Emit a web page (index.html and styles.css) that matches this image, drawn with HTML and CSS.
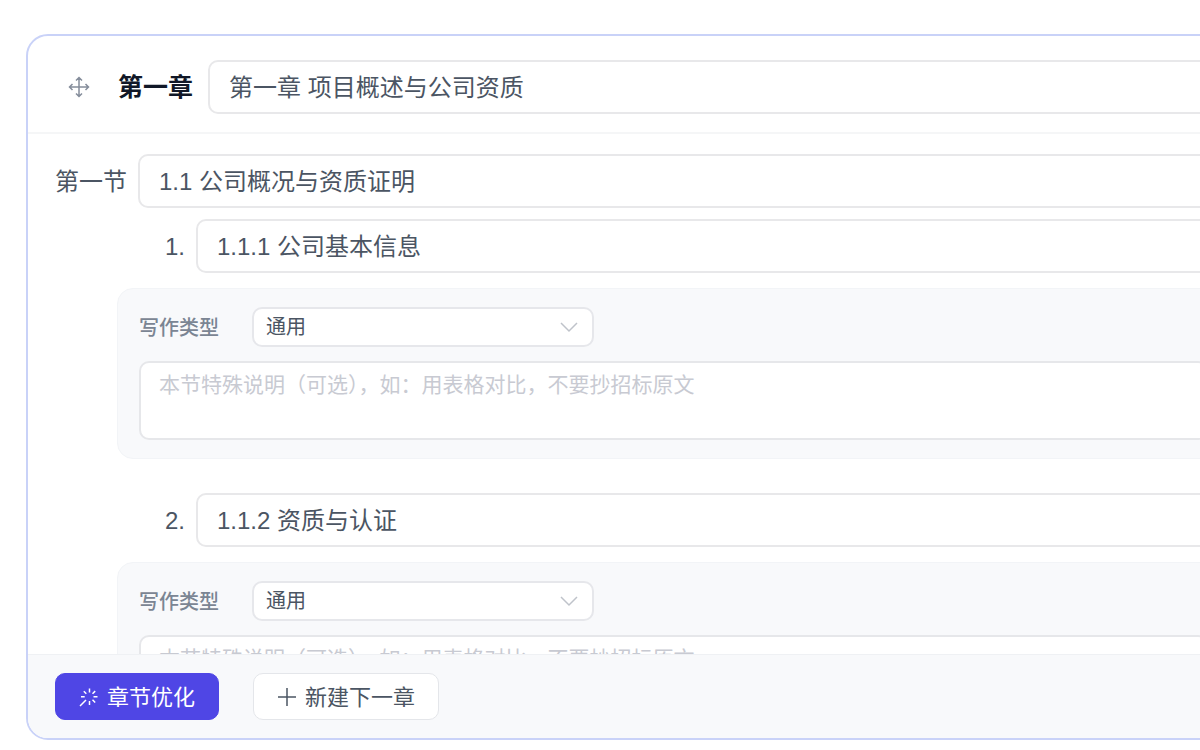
FILE: index.html
```html
<!DOCTYPE html>
<html lang="zh-CN">
<head>
<meta charset="utf-8">
<meta name="viewport" content="width=device-width, initial-scale=1">
<title>章节编辑</title>
<link rel="stylesheet" href="styles.css">
</head>
<body>
<main class="chapter">
  <header class="chapter-head">
    <svg class="drag-icon" viewBox="0 0 22 22" aria-hidden="true"><path d="M11 1.5v19M1.5 11h19M8 4.5l3-3 3 3M8 17.5l3 3 3-3M4.5 8l-3 3 3 3M17.5 8l3 3-3 3"/></svg>
    <label class="chapter-label" for="chapter-title">第一章</label>
    <input class="field" id="chapter-title" type="text" value="第一章 项目概述与公司资质">
  </header>

  <div class="chapter-body">
    <div class="section-row">
      <label class="section-label" for="section-title">第一节</label>
      <input class="field" id="section-title" type="text" value="1.1 公司概况与资质证明">
    </div>
    <div class="items">
      <section class="item">
        <div class="item-row">
          <label class="item-number" for="item-1">1.</label>
          <input class="field" id="item-1" type="text" value="1.1.1 公司基本信息">
        </div>
        <div class="panel">
          <div class="type-row">
            <label class="type-label" for="type-1">写作类型</label>
            <div class="select-wrap">
              <select class="select" id="type-1"><option>通用</option></select>
              <svg class="chevron" viewBox="0 0 20 12" aria-hidden="true"><path d="M2 2l8 8 8-8"/></svg>
            </div>
          </div>
          <textarea class="note" aria-label="本节特殊说明" placeholder="本节特殊说明（可选），如：用表格对比，不要抄招标原文"></textarea>
        </div>
      </section>
      <section class="item">
        <div class="item-row">
          <label class="item-number" for="item-2">2.</label>
          <input class="field" id="item-2" type="text" value="1.1.2 资质与认证">
        </div>
        <div class="panel">
          <div class="type-row">
            <label class="type-label" for="type-2">写作类型</label>
            <div class="select-wrap">
              <select class="select" id="type-2"><option>通用</option></select>
              <svg class="chevron" viewBox="0 0 20 12" aria-hidden="true"><path d="M2 2l8 8 8-8"/></svg>
            </div>
          </div>
          <textarea class="note" aria-label="本节特殊说明" placeholder="本节特殊说明（可选），如：用表格对比，不要抄招标原文"></textarea>
        </div>
      </section>
    </div>
  </div>

  <footer class="chapter-foot">
    <button class="button primary" type="button">
      <svg class="button-icon" viewBox="0 0 20 20" aria-hidden="true"><path d="M10.5 1.5v4M10.5 14v4M14.5 9.8h4M2 9.8h3.7M13.5 6.8l2.7-2.7M13.5 12.8l2.7 2.7M7.3 6.8L4.8 4.3M7 13l-6 6"/></svg>
      章节优化
    </button>
    <button class="button" type="button">
      <svg class="button-icon" viewBox="0 0 20 20" aria-hidden="true"><path d="M10 1v18M1 10h18"/></svg>
      新建下一章
    </button>
  </footer>
</main>
</body>
</html>
```
FILE: styles.css
```css
* {
  box-sizing: border-box;
}

body {
  display: flex;
  height: 100vh;
  margin: 0;
  padding: 34px 0 10px 26px;
  overflow: hidden;
  background: #fff;
  color: #4b5563;
  font-family: "Liberation Sans", "Noto Sans CJK SC", sans-serif;
  font-size: 24px;
}

input,
select,
textarea,
button {
  margin: 0;
  color: inherit;
  font: inherit;
}

/* The card runs on past the right edge of the window. */
.chapter {
  display: flex;
  flex: 1;
  flex-direction: column;
  min-width: 0;
  margin-right: -32px;
  overflow: hidden;
  border: 2px solid #c9d2f8;
  border-radius: 22px;
}

.chapter-head {
  display: flex;
  align-items: center;
  padding: 24px 0 18px 40px;
  border-bottom: 2px solid #f5f6f7;
}

.drag-icon {
  width: 22px;
  height: 22px;
  margin-right: 28px;
  fill: none;
  stroke: #858d9b;
  stroke-width: 1.5;
}

.chapter-label {
  margin-right: 15px;
  padding-bottom: 4px;
  color: #111827;
  font-size: 25px;
  font-weight: 700;
}

.field {
  flex: 1;
  min-width: 0;
  height: 54px;
  padding: 0 19px 4px;
  border: 2px solid #e8e8ea;
  border-radius: 10px;
  background: #fff;
}

.chapter-body {
  flex: 1;
  min-height: 0;
  padding: 20px 0 0 27px;
  overflow: hidden;
}

.section-row {
  display: flex;
  align-items: center;
  gap: 11px;
}

.section-label {
  padding-bottom: 4px;
}

.items {
  display: flex;
  flex-direction: column;
  gap: 34px;
  margin-top: 11px;
  padding-left: 62px;
}

.item-row {
  display: flex;
  align-items: center;
  gap: 11px;
}

.item-number {
  width: 68px;
  padding-top: 2px;
  text-align: right;
}

.panel {
  display: flex;
  flex-direction: column;
  gap: 14px;
  margin-top: 15px;
  padding: 18px 21px;
  border: 1px solid #f2f4f7;
  border-radius: 16px;
  background: #f8f9fb;
}

.type-row {
  display: flex;
  align-items: center;
}

.type-label {
  width: 113px;
  padding-bottom: 2px;
  color: #7b8593;
  font-size: 20px;
  font-weight: 500;
}

.select-wrap {
  position: relative;
  width: 342px;
}

.select {
  display: block;
  width: 100%;
  height: 40px;
  padding: 0 12px;
  border: 2px solid #e6e7eb;
  border-radius: 10px;
  background: #fff;
  appearance: none;
  font-size: 20px;
}

.chevron {
  position: absolute;
  top: 14px;
  right: 15px;
  width: 20px;
  height: 12px;
  fill: none;
  stroke: #bfc3ca;
  stroke-width: 1.5;
  pointer-events: none;
}

.note {
  display: block;
  width: 100%;
  height: 79px;
  padding: 8px 18px;
  border: 2px solid #e6e7ea;
  border-radius: 10px;
  background: #fff;
  font-size: 21px;
  line-height: 28px;
  resize: none;
}

.note::placeholder {
  color: #c8cad2;
}

.chapter-foot {
  display: flex;
  gap: 34px;
  padding: 18px 27px;
  border-top: 1px solid #eff1f4;
  background: #f8f9fb;
}

.button {
  display: flex;
  align-items: center;
  gap: 8px;
  height: 47px;
  padding: 0 23px 4px;
  border: 1px solid #e4e6ea;
  border-radius: 10px;
  background: #fff;
  font-size: 22px;
}

.primary {
  border-color: #4f46e5;
  background: #4f46e5;
  color: #fff;
}

.button-icon {
  width: 20px;
  height: 20px;
  margin-top: 4px;
  fill: none;
  stroke: currentColor;
  stroke-width: 1.5;
}
```
